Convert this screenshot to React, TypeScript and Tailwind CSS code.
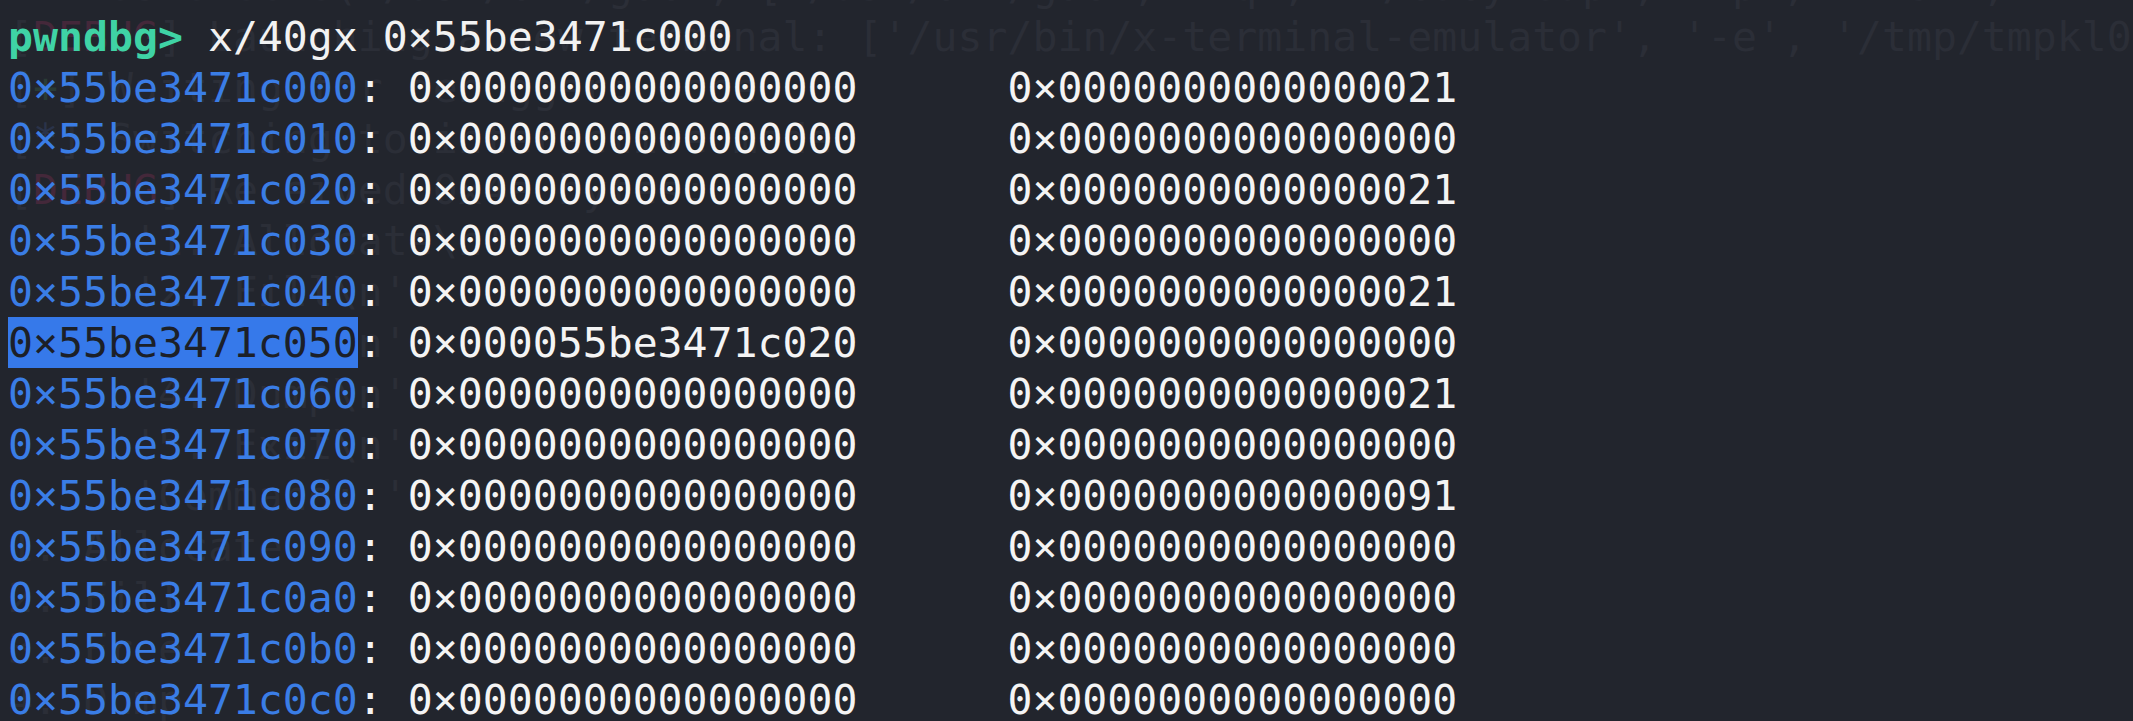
import React from "react";

const FONT = { fontFamily: '"DejaVu Sans Mono", "Liberation Mono", monospace' };

type Row = { addr: string; a: string; b: string; hl?: boolean };

const rows: Row[] = [
  { addr: "0×55be3471c000", a: "0×0000000000000000", b: "0×0000000000000021" },
  { addr: "0×55be3471c010", a: "0×0000000000000000", b: "0×0000000000000000" },
  { addr: "0×55be3471c020", a: "0×0000000000000000", b: "0×0000000000000021" },
  { addr: "0×55be3471c030", a: "0×0000000000000000", b: "0×0000000000000000" },
  { addr: "0×55be3471c040", a: "0×0000000000000000", b: "0×0000000000000021" },
  { addr: "0×55be3471c050", a: "0×000055be3471c020", b: "0×0000000000000000", hl: true },
  { addr: "0×55be3471c060", a: "0×0000000000000000", b: "0×0000000000000021" },
  { addr: "0×55be3471c070", a: "0×0000000000000000", b: "0×0000000000000000" },
  { addr: "0×55be3471c080", a: "0×0000000000000000", b: "0×0000000000000091" },
  { addr: "0×55be3471c090", a: "0×0000000000000000", b: "0×0000000000000000" },
  { addr: "0×55be3471c0a0", a: "0×0000000000000000", b: "0×0000000000000000" },
  { addr: "0×55be3471c0b0", a: "0×0000000000000000", b: "0×0000000000000000" },
  { addr: "0×55be3471c0c0", a: "0×0000000000000000", b: "0×0000000000000000" },
];

type Ghost = { tag?: string; tagColor?: string; text: string };

const ghost: Ghost[] = [
  { text: "    os.execve('/usr/bin/gdb', ['/usr/bin/gdb', '-q', './babyheap', '-p', '2431', '-x', '/tmp/pwnd3ek.gdb'], os.environ)" },
  { tag: "DEBUG", tagColor: "text-[#44283a]", text: " Launching a new terminal: ['/usr/bin/x-terminal-emulator', '-e', '/tmp/tmpkl0x8jzr']" },
  { tag: "+", tagColor: "text-[#2a3b36]", text: " Waiting for debugger: Done" },
  { tag: "*", tagColor: "text-[#2a334a]", text: " Switching to interactive mode" },
  { tag: "DEBUG", tagColor: "text-[#44283a]", text: " Received 0x4a bytes:" },
  { text: "    b'1. Allocate\\n'" },
  { text: "    b'2. Fill\\n'" },
  { text: "    b'3. Free\\n'" },
  { text: "    b'4. Dump\\n'" },
  { text: "    b'5. Exit\\n'" },
  { text: "    b'Command: '" },
  { text: "1. Allocate" },
  { text: "2. Fill" },
  { text: "3. Free" },
  { text: "4. Dump" },
];

export default function App() {
  return (
    <div
      className="relative h-[721px] w-full overflow-hidden bg-[#22252d] text-[41.5px]"
      style={FONT}
    >
      {/* faint background text of the terminal underneath */}
      <div className="absolute left-0 right-0 top-[-40px] pl-[8px] text-[#2b2e37] select-none">
        {ghost.map((g, i) => (
          <div key={i} className="h-[51px] leading-[51px] whitespace-pre">
            {g.tag ? (
              <>
                [<span className={g.tagColor}>{g.tag}</span>]
              </>
            ) : null}
            {g.text}
          </div>
        ))}
      </div>

      <div className="relative pl-[8px] pt-[11px]">
        <div className="h-[51px] leading-[51px] whitespace-pre text-[#f2f2f2]">
          <span className="font-bold text-[#3fd3a5]">pwndbg&gt;</span> x/40gx 0×55be3471c000
        </div>
        {rows.map((r) => (
          <div key={r.addr} className="flex h-[51px] leading-[51px] whitespace-pre text-[#f4f4f4]">
            <span
              className={
                r.hl
                  ? "inline-block h-[51px] bg-[#3679ea] text-[#1c2028]"
                  : "inline-block h-[51px] text-[#3a7de6]"
              }
            >
              {r.addr}
            </span>
            <span>{": " + r.a + "      " + r.b}</span>
          </div>
        ))}
      </div>
    </div>
  );
}
